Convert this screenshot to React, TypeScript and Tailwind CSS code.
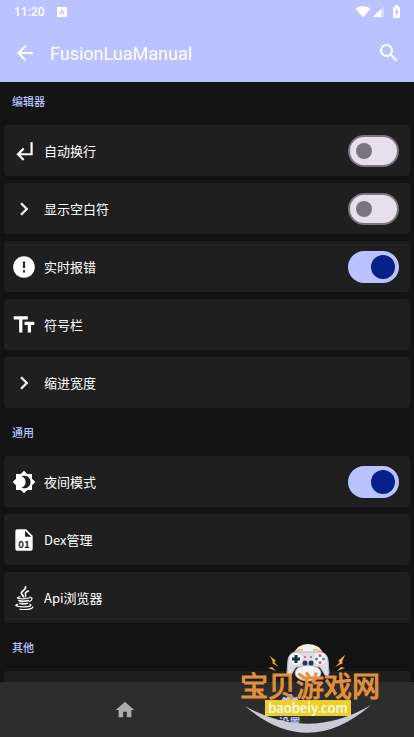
import { useState } from "react";
import type { ReactNode } from "react";
import {
  MdArrowBack,
  MdChevronRight,
  MdError,
  MdHome,
  MdSearch,
  MdSettings,
  MdSubdirectoryArrowLeft,
  MdTextFields,
} from "react-icons/md";

interface SettingItem {
  title: string;
  icon: ReactNode;
  checked?: boolean;
}

interface SettingSection {
  title: string;
  items: SettingItem[];
}

function NightIcon() {
  return (
    <svg viewBox="0 0 24 24" className="size-6" aria-hidden="true">
      <path
        fill="currentColor"
        fillRule="evenodd"
        d="M20 8.690V4h-4.690L12 .690 8.690 4H4v4.690L.690 12 4 15.310V20h4.690L12 23.310 15.310 20H20v-4.690L23.310 12zM9.500 6.200C15.500 4.300 18.600 8.200 18.600 12s-3.100 7.700-9.100 5.800C15 15.800 15 8.200 9.500 6.200z"
      />
    </svg>
  );
}

function DexFileIcon() {
  return (
    <svg viewBox="0 0 24 24" className="size-[26px]" aria-hidden="true">
      <path
        fill="currentColor"
        fillRule="evenodd"
        d="M6 2h8l6 6v12a2 2 0 0 1-2 2H6a2 2 0 0 1-2-2V4a2 2 0 0 1 2-2zm7 1.500V9h5.500z"
      />
      <text x="12" y="19" textAnchor="middle" fontSize="9" fontWeight="700" fill="#1f1f1f">
        01
      </text>
    </svg>
  );
}

function JavaIcon() {
  return (
    <svg viewBox="0 0 24 24" className="size-6" fill="none" stroke="currentColor" strokeLinecap="round" aria-hidden="true">
      <path strokeWidth="1.800" d="M13.500 1C14.500 4 8.500 5 9.500 7.500c.4 1.200 1.500 1.700 1.800 3" />
      <path strokeWidth="1.500" d="M16.500 5c-2.500 1-3.800 2-3 3.300.5.900.5 1.500-.3 2.400" />
      <path strokeWidth="1.200" d="M8 10.800c-3 .5-3.500 1.400-1 1.700 3 .4 7.500.2 10-.5M17.500 11.300c3.500-.4 3.300 2.800-.3 4.200" />
      <path strokeWidth="1.700" d="M7 14.500c2.500 1 6.500.8 9.300 0M8 17.300c2.200.9 5 .8 7.300 0" />
      <path strokeWidth="1.300" d="M6 18.300c-4 .8-2.500 2.300 5 2.500 6.500.1 9.500-1.300 7-2.500M8 23.300c6 .5 12-.2 12.800-2.300" />
    </svg>
  );
}

const sections: SettingSection[] = [
  {
    title: "编辑器",
    items: [
      { title: "自动换行", icon: <MdSubdirectoryArrowLeft className="size-[26px]" />, checked: false },
      { title: "显示空白符", icon: <MdChevronRight className="size-[26px]" />, checked: false },
      { title: "实时报错", icon: <MdError className="size-[26px]" />, checked: true },
      { title: "符号栏", icon: <MdTextFields className="size-[26px]" /> },
      { title: "缩进宽度", icon: <MdChevronRight className="size-[26px]" /> },
    ],
  },
  {
    title: "通用",
    items: [
      { title: "夜间模式", icon: <NightIcon />, checked: true },
      { title: "Dex管理", icon: <DexFileIcon /> },
      { title: "Api浏览器", icon: <JavaIcon /> },
    ],
  },
  {
    title: "其他",
    items: [{ title: "", icon: null }],
  },
];

function Switch({ label, initial }: { label: string; initial: boolean }) {
  const [on, setOn] = useState(initial);
  return (
    <label className="relative flex h-8 w-[51px] shrink-0 items-center">
      <input
        type="checkbox"
        role="switch"
        aria-label={label}
        checked={on}
        onChange={(e) => setOn(e.target.checked)}
        className="peer h-8 w-full appearance-none rounded-full border-2 border-[#79747e] bg-[#e7e0ec] checked:border-[#bac3ff] checked:bg-[#bac3ff]"
      />
      <span className="pointer-events-none absolute left-2 size-4 rounded-full bg-[#79747e] peer-checked:right-1 peer-checked:left-auto peer-checked:size-6 peer-checked:bg-[#08218a]" />
    </label>
  );
}

function SettingRow({ item }: { item: SettingItem }) {
  return (
    <li className="flex h-[51px] items-center rounded bg-[#1f1f1f] pr-[11px] pl-[7px] text-white">
      <span className="flex w-[26px] justify-center">{item.icon}</span>
      <span className="ml-[7px] flex-1 text-[13px] leading-5">{item.title}</span>
      {item.checked !== undefined && <Switch label={item.title} initial={item.checked} />}
    </li>
  );
}

function StatusBar() {
  return (
    <div className="flex h-6 items-center pr-[13px] pl-3.5 text-white">
      <span className="font-[Roboto] text-xs font-medium">11:20</span>
      <svg viewBox="0 0 10 10" className="ml-[13px] size-2.5" aria-hidden="true">
        <rect width="10" height="10" rx="1" fill="#fff" />
        <path d="M3 7.500L5 2.500l2 5M3.700 6h2.600" fill="none" stroke="#bac3ff" strokeWidth="1" />
      </svg>
      <svg viewBox="0 0 46 14" className="ml-auto h-3.5 w-[46px]" aria-hidden="true">
        <path d="M0.500 3.500Q8 -1.500 15.500 3.500L8 12.500z" fill="#fff" />
        <path d="M29 1v11H18z" fill="#fff" fillOpacity="0.4" />
        <path d="M26 4v8h-8z" fill="#fff" />
        <path d="M38 2h2V0h3v2h2v11h-7z" fill="#fff" />
        <path d="M42.500 3l-3 4.500h1.700V11.500l2.600-5h-1.600z" fill="#bac3ff" />
      </svg>
    </div>
  );
}

function Watermark() {
  return (
    <div className="pointer-events-none absolute right-8 bottom-0 flex h-[95px] w-[144px] flex-col items-center pt-7">
      <svg viewBox="0 0 144 95" className="absolute inset-0 size-full" aria-hidden="true">
        <path d="M55 13Q59 2 70 2Q82 2 86 13z" fill="#f0f0f2" />
        <path d="M57 10q3-3 8-2M75 8q5-1 8 2" fill="none" stroke="#e6c763" strokeWidth="2" />
        <path
          d="M57 10h26q6 1 7 8l1 13q-1 5-4 2l-5-8H58l-5 8q-3 3-4-2l1-13q1-7 7-8z"
          fill="#dedee8"
          stroke="#b5b5c4"
          strokeWidth="1"
        />
        <ellipse cx="70" cy="31" rx="13" ry="8" fill="#f4f2f2" stroke="#a9a9bb" strokeWidth="1" />
        <circle cx="58" cy="17" r="6" fill="#f5f5f8" />
        <circle cx="82" cy="17" r="6" fill="#f5f5f8" />
        <path d="M58 13v8M54 17h8" stroke="#182f42" strokeWidth="3" />
        <circle cx="67" cy="21" r="2.500" fill="#223a52" />
        <circle cx="73" cy="21" r="2.500" fill="#223a52" />
        <circle cx="67" cy="15" r="1" fill="#d8485c" />
        <circle cx="73" cy="15" r="1" fill="#d8485c" />
        <circle cx="82" cy="13.500" r="1.500" fill="#e2525e" />
        <circle cx="82" cy="20.500" r="1.500" fill="#e2525e" />
        <circle cx="78.500" cy="17" r="1.500" fill="#3996a8" />
        <circle cx="85.500" cy="17" r="1.500" fill="#3996a8" />
        <g fill="#f2b32c">
          <path d="M32 14l6 5-2 1 5 5-7-4 1-1z" />
          <path d="M30 26l4-1 4 4-5-2z" />
          <path d="M107 13l-7 6 2 1-5 5 8-4-1-1z" />
          <path d="M107 26l-4-1-4 4 5-2z" />
        </g>
        <path d="M7 64Q70 100 133 63Q70 118 7 64z" fill="#cbcbd8" />
      </svg>
      <span className="relative text-[28px] leading-[30px] whitespace-nowrap text-[#ee8b1d] [-webkit-text-stroke:1px_#e0944a]">
        宝贝游戏网
      </span>
      <span className="relative -ml-1 h-4 w-[86px] bg-[#edcf27] text-center text-[13px] leading-4 font-medium text-white">
        baobeiy.com
      </span>
    </div>
  );
}

export default function App() {
  return (
    <div className="relative flex h-screen flex-col overflow-hidden bg-[#131313] font-['Noto_Sans_CJK_SC',sans-serif]">
      <header className="shrink-0 bg-[#bac3ff] text-white">
        <StatusBar />
        <div className="flex h-[58px] items-center px-[13px]">
          <button type="button" aria-label="返回">
            <MdArrowBack className="size-6" />
          </button>
          <h1 className="ml-[13px] flex-1 font-[Roboto] text-[18px]">FusionLuaManual</h1>
          <button type="button" aria-label="搜索">
            <MdSearch className="size-6" />
          </button>
        </div>
      </header>

      <main className="min-h-0 flex-1 overflow-y-auto px-1 [scrollbar-width:none]">
        {sections.map((section) => (
          <section key={section.title} className="mb-[5px]">
            <h2 className="flex h-[43px] items-center px-2 pb-1 text-[11px] font-medium text-[#bac3ff]">
              {section.title}
            </h2>
            <ul className="flex flex-col gap-[7px]">
              {section.items.map((item) => (
                <SettingRow key={item.title} item={item} />
              ))}
            </ul>
          </section>
        ))}
      </main>

      <nav className="flex h-[55px] shrink-0 bg-[#2d2d2d] px-[42px]">
        <button type="button" aria-label="主页" className="flex flex-1 items-center justify-center text-[#acacac]">
          <MdHome className="size-[22px]" />
        </button>
        <button
          type="button"
          className="flex flex-1 flex-col items-center justify-end pb-[7px] text-[11px] leading-4 font-bold text-[#bac3ff]"
        >
          <MdSettings className="size-[22px]" />
          设置
        </button>
      </nav>

      <Watermark />
    </div>
  );
}
